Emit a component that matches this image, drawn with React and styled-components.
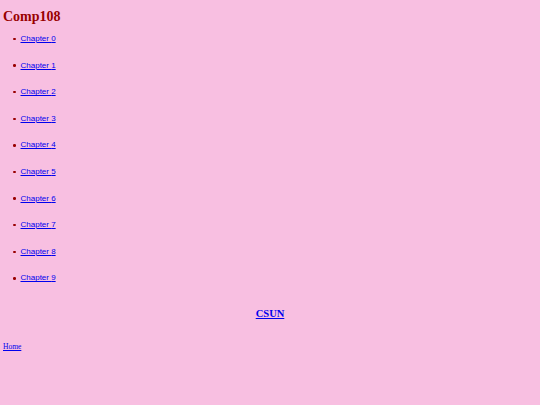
import React from "react";
import styled, { createGlobalStyle } from "styled-components";

const GlobalStyle = createGlobalStyle`
    html, body {
        margin: 0;
        padding: 0;
        background: #f8bfe1;
    }
    body {
        font-family: "Liberation Serif", "Times New Roman", serif;
    }
`;

const Page = styled.div`
    padding: 8px 3px 20px 3px;
`;

const Title = styled.h1`
    margin: 0 0 8px 0;
    font-size: 14px;
    font-weight: bold;
    color: #990000;
    line-height: 18px;
`;

const ChapterList = styled.ul`
    margin: 0;
    padding-left: 10px;
    list-style: none;
    font-family: "Liberation Sans", Arial, sans-serif;
    font-size: 8px;
`;

const Item = styled.li`
    display: flex;
    align-items: center;
    gap: 5px;
    line-height: 10px;
    margin-bottom: 16.6px;
`;

const Bullet = styled.span`
    width: 2.5px;
    height: 2.5px;
    border-radius: 50%;
    background: #990000;
    flex-shrink: 0;
`;

const ChapterLink = styled.a`
    color: #0000ee;
`;

const Center = styled.div`
    text-align: center;
    margin-top: 24px;
    font-size: 10.5px;
    font-weight: bold;
    line-height: 14px;
`;

const HomeRow = styled.div`
    margin-top: 21px;
    font-size: 7.5px;
    line-height: 10px;
`;

const Link = styled.a`
    color: #0000ee;
`;

const chapters = [0, 1, 2, 3, 4, 5, 6, 7, 8, 9];

export default function App() {
    return (
        <>
            <GlobalStyle />
            <Page>
                <Title>Comp108</Title>
                <ChapterList>
                    {chapters.map(n => (
                        <Item key={n}>
                            <Bullet />
                            <ChapterLink href="#">Chapter {n}</ChapterLink>
                        </Item>
                    ))}
                </ChapterList>
                <Center>
                    <Link href="#">CSUN</Link>
                </Center>
                <HomeRow>
                    <Link href="#">Home</Link>
                </HomeRow>
            </Page>
        </>
    );
}
